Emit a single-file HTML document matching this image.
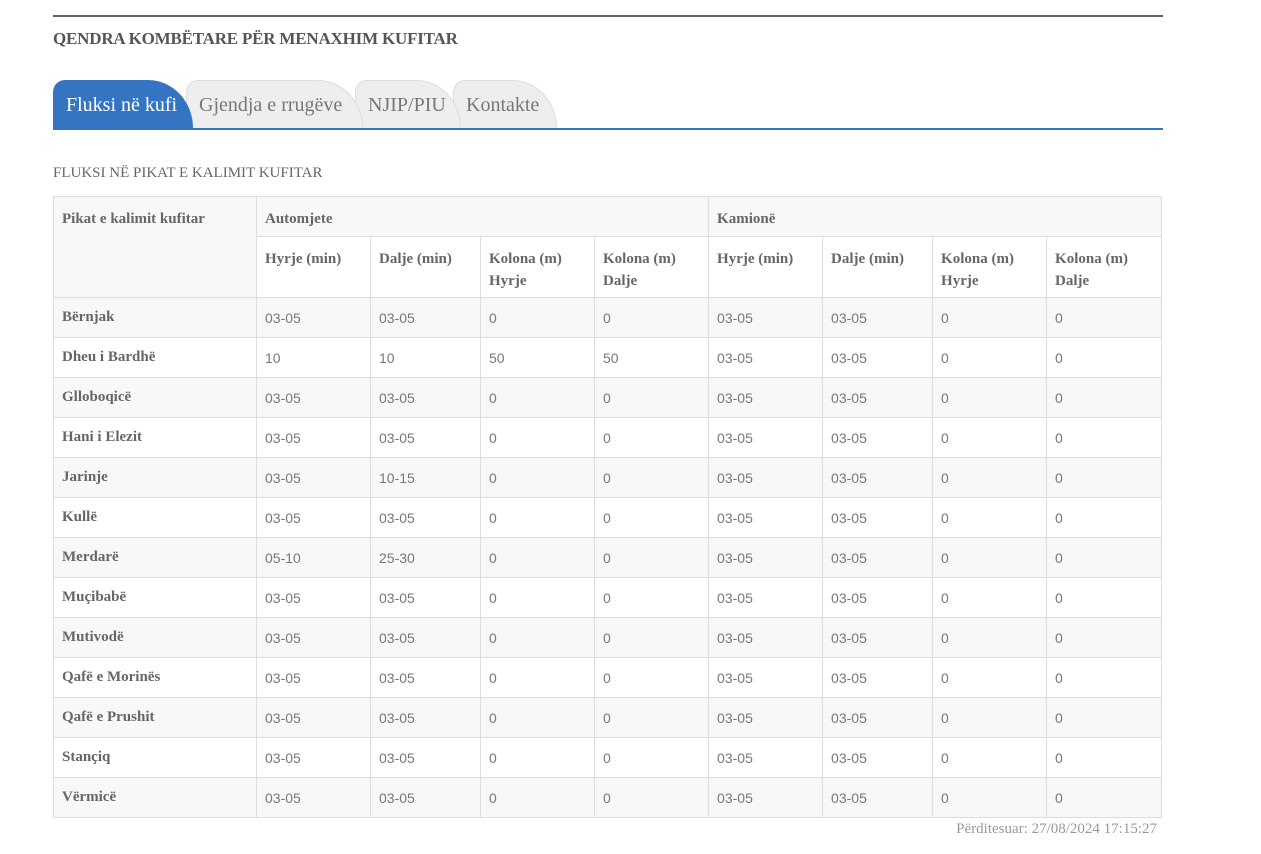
<!DOCTYPE html>
<html><head><meta charset="utf-8"><style>
*{margin:0;padding:0;box-sizing:border-box}
body{width:1261px;height:854px;background:#fff;font-family:"Liberation Serif",serif;color:#555;position:relative;overflow:hidden}
.topline{position:absolute;left:53px;top:15px;width:1110px;height:2px;background:#666}
h1{position:absolute;left:53px;top:29px;font-size:17px;font-weight:bold;color:#555;letter-spacing:-0.2px}
.tabs{position:absolute;left:53px;top:80px;height:50px;width:1110px;border-bottom:2px solid #3474c0}
.tab{position:absolute;top:0;height:48px;font-size:20px;color:#777;padding:13px 0 0 12px;background:#eee;border:1px solid #ddd;border-bottom:none;border-radius:12px 45px 0 0/12px 48px 0 0}
.tab.a{background:#3474c0;color:#fff;border-color:#3474c0}
.sub{position:absolute;left:53px;top:165px;font-size:15px;color:#666}
table{position:absolute;left:53px;top:196px;border-collapse:collapse;width:1108px;table-layout:fixed}
td,th{border:1px solid #ddd;text-align:left;vertical-align:top;font-size:15px}
th{font-weight:bold;color:#666;padding:11px 8px 0;line-height:22px}
td{height:40px;padding:12px 8px 0;font-family:"Liberation Sans",sans-serif;font-size:14px;color:#777}
td.n{font-family:"Liberation Serif",serif;font-weight:bold;font-size:15px;color:#666;padding-top:11px}
tr.g td{background:#f8f8f8}
.hd th{background:#f8f8f8}
.upd{position:absolute;right:104px;top:821px;font-size:15px;color:#999}
</style></head><body>
<div class="topline"></div>
<h1>QENDRA KOMBËTARE PËR MENAXHIM KUFITAR</h1>
<div class="tabs">
<div class="tab" style="left:400px;width:104px">Kontakte</div>
<div class="tab" style="left:302px;width:106px">NJIP/PIU</div>
<div class="tab" style="left:133px;width:177px">Gjendja e rrugëve</div>
<div class="tab a" style="left:0;width:140px">Fluksi në kufi</div>
</div>
<div class="sub">FLUKSI NË PIKAT E KALIMIT KUFITAR</div>
<table>
<colgroup><col style="width:203px"><col style="width:114px"><col style="width:110px"><col style="width:114px"><col style="width:114px"><col style="width:114px"><col style="width:110px"><col style="width:114px"><col style="width:115px"></colgroup>
<tr class="hd" style="height:40px"><th rowspan="2">Pikat e kalimit kufitar</th><th colspan="4">Automjete</th><th colspan="4">Kamionë</th></tr>
<tr style="height:61px"><th style="background:#fff">Hyrje (min)</th><th style="background:#fff">Dalje (min)</th><th style="background:#fff">Kolona (m) Hyrje</th><th style="background:#fff">Kolona (m) Dalje</th><th style="background:#fff">Hyrje (min)</th><th style="background:#fff">Dalje (min)</th><th style="background:#fff">Kolona (m) Hyrje</th><th style="background:#fff">Kolona (m) Dalje</th></tr>
<tr class="g"><td class="n">Bërnjak</td><td>03-05</td><td>03-05</td><td>0</td><td>0</td><td>03-05</td><td>03-05</td><td>0</td><td>0</td></tr>
<tr><td class="n">Dheu i Bardhë</td><td>10</td><td>10</td><td>50</td><td>50</td><td>03-05</td><td>03-05</td><td>0</td><td>0</td></tr>
<tr class="g"><td class="n">Glloboqicë</td><td>03-05</td><td>03-05</td><td>0</td><td>0</td><td>03-05</td><td>03-05</td><td>0</td><td>0</td></tr>
<tr><td class="n">Hani i Elezit</td><td>03-05</td><td>03-05</td><td>0</td><td>0</td><td>03-05</td><td>03-05</td><td>0</td><td>0</td></tr>
<tr class="g"><td class="n">Jarinje</td><td>03-05</td><td>10-15</td><td>0</td><td>0</td><td>03-05</td><td>03-05</td><td>0</td><td>0</td></tr>
<tr><td class="n">Kullë</td><td>03-05</td><td>03-05</td><td>0</td><td>0</td><td>03-05</td><td>03-05</td><td>0</td><td>0</td></tr>
<tr class="g"><td class="n">Merdarë</td><td>05-10</td><td>25-30</td><td>0</td><td>0</td><td>03-05</td><td>03-05</td><td>0</td><td>0</td></tr>
<tr><td class="n">Muçibabë</td><td>03-05</td><td>03-05</td><td>0</td><td>0</td><td>03-05</td><td>03-05</td><td>0</td><td>0</td></tr>
<tr class="g"><td class="n">Mutivodë</td><td>03-05</td><td>03-05</td><td>0</td><td>0</td><td>03-05</td><td>03-05</td><td>0</td><td>0</td></tr>
<tr><td class="n">Qafë e Morinës</td><td>03-05</td><td>03-05</td><td>0</td><td>0</td><td>03-05</td><td>03-05</td><td>0</td><td>0</td></tr>
<tr class="g"><td class="n">Qafë e Prushit</td><td>03-05</td><td>03-05</td><td>0</td><td>0</td><td>03-05</td><td>03-05</td><td>0</td><td>0</td></tr>
<tr><td class="n">Stanҫiq</td><td>03-05</td><td>03-05</td><td>0</td><td>0</td><td>03-05</td><td>03-05</td><td>0</td><td>0</td></tr>
<tr class="g"><td class="n">Vërmicë</td><td>03-05</td><td>03-05</td><td>0</td><td>0</td><td>03-05</td><td>03-05</td><td>0</td><td>0</td></tr>
</table>
<div class="upd">Përditesuar: 27/08/2024 17:15:27</div>
</body></html>
